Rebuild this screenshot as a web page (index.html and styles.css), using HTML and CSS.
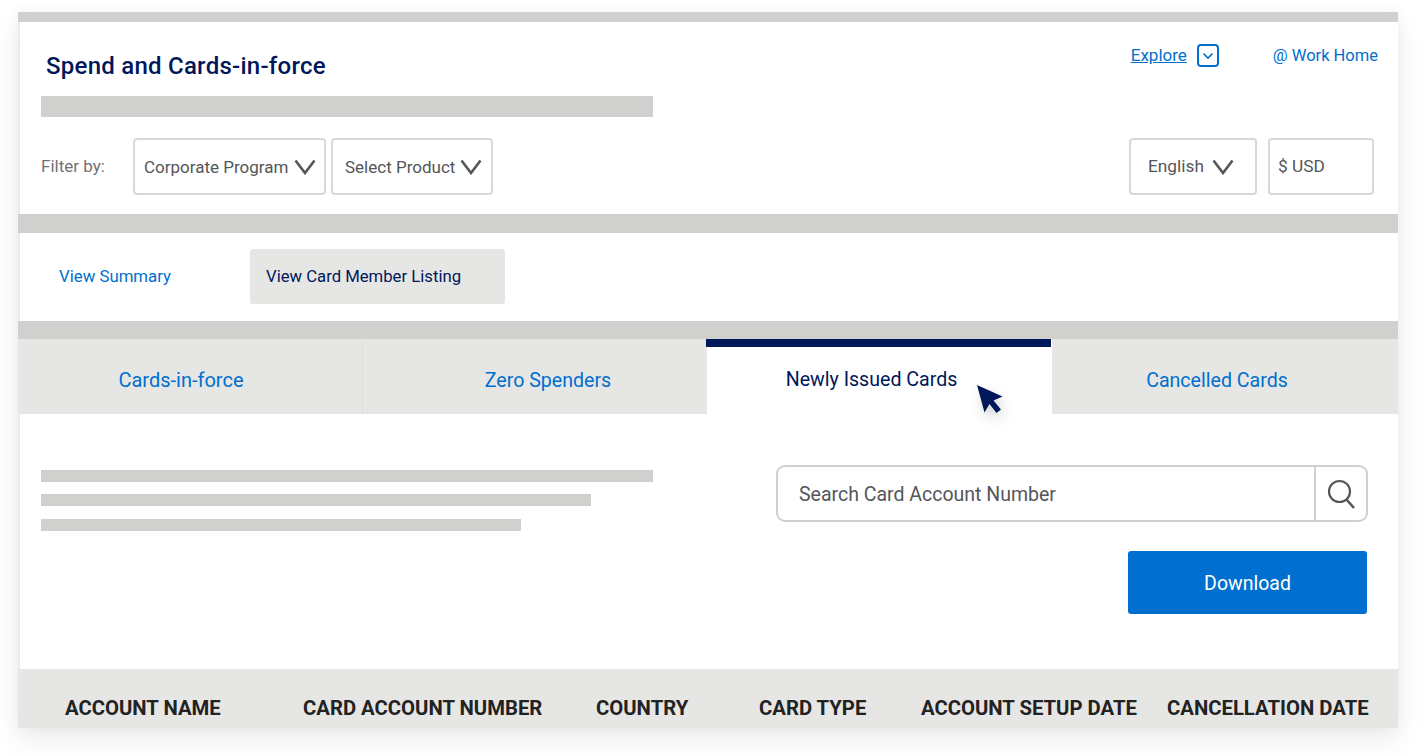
FILE: index.html
```html
<!DOCTYPE html>
<html lang="en">
<head>
<meta charset="utf-8">
<title>Spend and Cards-in-force</title>
<link rel="stylesheet" href="styles.css">
</head>
<body>
<main class="frame">
  <div class="bar bar-top"></div>
  <header class="header">
    <div class="top-row">
      <h1 class="title">Spend and Cards-in-force</h1>
      <div class="links">
        <a class="link underline explore">Explore</a>
        <span class="explore-box">
          <svg width="12" height="8" viewBox="0 0 12 8"><path d="M1.5 1.5 6 6l4.500-4.500" fill="none" stroke="#006fcf" stroke-width="1.600"/></svg>
        </span>
        <a class="link work">@ Work Home</a>
      </div>
    </div>
    <div class="ph ph-head"></div>
    <div class="filter-row">
      <div class="filter-group">
        <span class="filter-label">Filter by:</span>
        <div class="select sel-program"><span>Corporate Program</span>
          <svg class="chev" width="22" height="16" viewBox="0 0 22 16"><path d="M1.500 1.500 11 14l9.500-12.500" fill="none" stroke="#53565a" stroke-width="2.600"/></svg>
        </div>
        <div class="select sel-product"><span>Select Product</span>
          <svg class="chev" width="22" height="16" viewBox="0 0 22 16"><path d="M1.500 1.500 11 14l9.500-12.500" fill="none" stroke="#53565a" stroke-width="2.600"/></svg>
        </div>
      </div>
      <div class="filter-group wide-gap">
        <div class="select sel-lang"><span class="raised">English</span>
          <svg class="chev" width="22" height="16" viewBox="0 0 22 16"><path d="M1.500 1.500 11 14l9.500-12.500" fill="none" stroke="#53565a" stroke-width="2.600"/></svg>
        </div>
        <div class="select sel-usd"><span class="raised">$ USD</span></div>
      </div>
    </div>
  </header>
  <div class="bar bar-mid"></div>
  <nav class="subnav">
    <a class="link sub-summary">View Summary</a>
    <a class="pill">View Card Member Listing</a>
  </nav>
  <div class="bar bar-low"></div>
  <div class="tabs">
    <div class="tab tab-one link">Cards-in-force</div>
    <div class="tab tab-two link">Zero Spenders</div>
    <div class="tab tab-active">Newly Issued Cards
      <svg class="cursor" width="26" height="28" viewBox="0 0 26 28"><path d="M0 0 25.500 11.500 16.500 15.500 24 24.500 19.500 28 12.500 19 7.500 27.500Z" fill="#00175a"/></svg>
    </div>
    <div class="tab tab-four link">Cancelled Cards</div>
  </div>
  <section class="content">
    <div class="lines">
      <div class="ph line-a"></div>
      <div class="ph line-b"></div>
      <div class="ph line-c"></div>
    </div>
    <div class="actions">
      <div class="search">
        <span class="search-text">Search Card Account Number</span>
        <span class="search-btn">
          <svg width="30" height="32" viewBox="0 0 30 32"><circle cx="13.500" cy="13.500" r="10.500" fill="none" stroke="#53565a" stroke-width="2.200"/><path d="M20.500 21.500 28 30" fill="none" stroke="#53565a" stroke-width="2.600"/></svg>
        </span>
      </div>
      <button class="download">Download</button>
    </div>
  </section>
  <div class="thead">
    <span>ACCOUNT NAME</span>
    <span>CARD ACCOUNT NUMBER</span>
    <span>COUNTRY</span>
    <span>CARD TYPE</span>
    <span>ACCOUNT SETUP DATE</span>
    <span>CANCELLATION DATE</span>
  </div>
</main>
</body>
</html>
```
FILE: styles.css
```css
* { box-sizing: border-box; }
html, body { margin: 0; height: 100%; background: #fff; overflow: hidden; }
body { padding: 12px 23px 0 18px; font-family: Roboto, "Liberation Sans", sans-serif; color: #53565a; }
.frame { width: 1380px; height: 716px; background: #fff; display: flex; flex-direction: column; box-shadow: 0 12px 26px rgba(0,0,0,.08), 0 0 14px rgba(0,0,0,.04); border-left: 2px solid #ebebe9; }
.bar { background: #d0d0ce; margin-left: -2px; flex: none; }
.bar-top { height: 10px; }
.bar-mid { height: 19px; }
.bar-low { height: 18px; }
.ph { background: #d0d0ce; }
.link { color: #006fcf; }
.underline { text-decoration: underline; }

.header { height: 192px; padding: 0 24px 0 21px; flex: none; }
.top-row { height: 74px; display: flex; justify-content: space-between; align-items: flex-start; }
.title { margin: 29px 0 0 5px; font-size: 24px; line-height: 30px; font-weight: 500; color: #00175a; letter-spacing: .25px; }
.links { margin: 22px -4px 0 0; display: flex; align-items: center; font-size: 16.500px; line-height: 22px; }
.explore { font-size: 17px; position: relative; top: -1px; }
.explore-box { margin-left: 10px; width: 22px; height: 23px; border: 2px solid #006fcf; border-radius: 4px; display: flex; align-items: center; justify-content: center; }
.work { margin-left: 54px; }
.ph-head { width: 612px; height: 21px; }
.filter-row { margin-top: 21px; display: flex; justify-content: space-between; }
.filter-group { display: flex; align-items: center; gap: 5px; }
.wide-gap { gap: 11px; }
.filter-label { width: 87px; font-size: 17px; color: #6f7175; position: relative; top: -1px; }
.select { height: 57px; border: 2px solid #d8d8d6; border-radius: 4px; display: flex; align-items: center; font-size: 17px; }
.raised { position: relative; top: -1px; font-size: 17.300px; }
.sel-program { width: 193px; padding-left: 9px; justify-content: space-between; padding-right: 8px; }
.sel-product { width: 162px; padding-left: 12px; justify-content: space-between; padding-right: 9px; }
.sel-lang { width: 128px; padding-left: 17px; justify-content: space-between; padding-right: 21px; }
.sel-usd { width: 106px; padding-left: 8px; }
.chev { flex: none; }

.subnav { height: 88px; flex: none; display: flex; align-items: center; padding-left: 39px; padding-bottom: 1px; }
.sub-summary { width: 191px; font-size: 16.800px; position: relative; top: -1px; }
.pill { width: 255px; height: 55px; background: #e6e6e4; border-radius: 3px; color: #00175a; display: flex; align-items: center; padding-left: 16px; font-size: 16.700px; }

.tabs { height: 75px; flex: none; display: grid; grid-template-columns: 345px 344px 345px 346px; margin-left: -2px; width: 1380px; font-size: 19.600px; }
.tab { background: #e6e6e4; display: flex; align-items: center; justify-content: center; padding-top: 7px; }
.tab-one { padding-right: 18px; font-size: 20px; border-right: 1px solid #dededc; }
.tab-two { padding-left: 26px; }
.tab-active { position: relative; background: #fff; color: #00175a; padding-right: 16px; padding-top: 6px; }
.tab-active::before { content: ""; position: absolute; left: -1px; right: 1px; top: 0; height: 8px; background: #00175a; }
.tab-four { padding-right: 16px; }
.cursor { position: absolute; left: 270px; top: 46px; filter: drop-shadow(2px 6px 6px rgba(0,0,0,.18)); }

.content { height: 255px; flex: none; display: flex; justify-content: space-between; padding: 51px 30px 0 21px; }
.lines { display: flex; flex-direction: column; padding-top: 5px; }
.line-a { width: 612px; height: 12px; margin-bottom: 12px; }
.line-b { width: 550px; height: 12px; margin-bottom: 13px; }
.line-c { width: 480px; height: 12px; }
.actions { display: flex; flex-direction: column; align-items: flex-end; }
.search { width: 592px; height: 57px; border: 2px solid #d0d0ce; border-radius: 9px; display: flex; align-items: center; justify-content: space-between; }
.search-text { padding: 1px 0 0 21px; font-size: 19.500px; }
.search-btn { width: 52px; height: 100%; border-left: 2px solid #d0d0ce; display: flex; align-items: center; justify-content: center; }
.download { margin: 29px 1px 0 0; padding: 1px 0 0; width: 239px; height: 63px; background: #006fcf; border: 0; border-radius: 3px; color: #fff; font: inherit; font-size: 19.500px; }

.thead { height: 59px; flex: none; margin-left: -2px; background: #e6e6e4; display: grid; grid-template-columns: 238px 293px 163px 162px 246px auto; padding: 19px 0 0 47px; align-items: center; font-size: 20.300px; font-weight: 700; color: #222; white-space: nowrap; }
```
